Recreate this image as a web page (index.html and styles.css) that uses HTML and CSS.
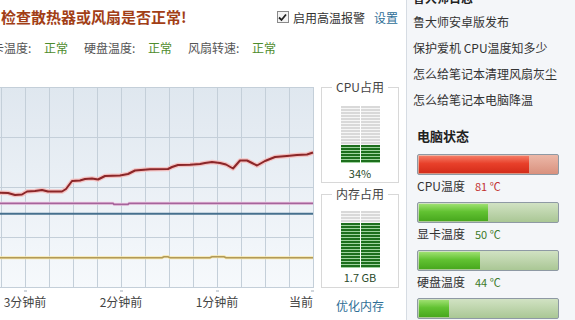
FILE: index.html
```html
<!DOCTYPE html>
<html lang="zh-CN">
<head>
<meta charset="utf-8">
<title>温度监控</title>
<link rel="stylesheet" href="styles.css">
</head>
<body>
<div class="page">
  <main class="main">
    <div class="header">
      <h1 class="title">检查散热器或风扇是否正常!</h1>
      <div class="options">
        <span class="check"><svg width="9" height="9" viewBox="0 0 9 9"><path d="M1 4.5 L3.5 7 L8 1.5" fill="none" stroke="#222" stroke-width="1.8"/></svg></span>
        <span class="opt-label">启用高温报警</span>
        <a class="link set">设置</a>
      </div>
    </div>
    <div class="status">
      <span class="s-label">显卡温度:</span><span class="s-val">正常</span>
      <span class="s-label">硬盘温度:</span><span class="s-val">正常</span>
      <span class="s-label">风扇转速:</span><span class="s-val">正常</span>
    </div>
    <div class="monitor">
      <div class="chart-col">
        <svg class="chart" width="314" height="206" viewBox="0 0 314 206">
          <defs>
            <linearGradient id="bg" x1="0" y1="0" x2="0" y2="1">
              <stop offset="0" stop-color="#dfe7ef"/>
              <stop offset="1" stop-color="#f6f9fc"/>
            </linearGradient>
          </defs>
          <rect x="0" y="0" width="313.5" height="200.5" fill="url(#bg)"/>
          <g stroke="#c4cfd9" stroke-width="1">
            <line x1="0" y1="0.5" x2="313.5" y2="0.5"/>
            <line x1="0" y1="50.5" x2="313.5" y2="50.5"/>
            <line x1="0" y1="100.5" x2="313.5" y2="100.5"/>
            <line x1="0" y1="150.5" x2="313.5" y2="150.5"/>
            <line x1="0" y1="200.5" x2="313.5" y2="200.5"/>
            <line x1="1.5" y1="0" x2="1.5" y2="201"/>
            <line x1="25.5" y1="0" x2="25.5" y2="201"/>
            <line x1="49.5" y1="0" x2="49.5" y2="201"/>
            <line x1="73.5" y1="0" x2="73.5" y2="201"/>
            <line x1="97.5" y1="0" x2="97.5" y2="201"/>
            <line x1="121.5" y1="0" x2="121.5" y2="201"/>
            <line x1="145.5" y1="0" x2="145.5" y2="201"/>
            <line x1="169.5" y1="0" x2="169.5" y2="201"/>
            <line x1="193.5" y1="0" x2="193.5" y2="201"/>
            <line x1="217.5" y1="0" x2="217.5" y2="201"/>
            <line x1="241.5" y1="0" x2="241.5" y2="201"/>
            <line x1="265.5" y1="0" x2="265.5" y2="201"/>
            <line x1="289.5" y1="0" x2="289.5" y2="201"/>
            <line x1="313.5" y1="0" x2="313.5" y2="201"/>
          </g>
          <g fill="#d0d6dc">
            <rect x="24" y="203" width="3" height="2"/>
            <rect x="120" y="203" width="3" height="2"/>
            <rect x="216" y="203" width="3" height="2"/>
            <rect x="311" y="203" width="3" height="2"/>
          </g>
          <polyline fill="none" stroke="#f7e7a8" stroke-width="3" points="0,170.7 162,170.7 164,169.7 168,169.7 170,170.7 210,170.7 212,169.7 224,169.7 226,170.7 313,170.7"/>
          <polyline fill="none" stroke="#b19a5a" stroke-width="1.6" points="0,170.7 162,170.7 164,169.7 168,169.7 170,170.7 210,170.7 212,169.7 224,169.7 226,170.7 313,170.7"/>
          <line x1="0" y1="126.7" x2="313" y2="126.7" stroke="#46708e" stroke-width="2"/>
          <polyline fill="none" stroke="#f2cfe8" stroke-width="3" points="0,116.3 113,116.3 114,117.3 128,117.3 129,116.3 313,116.3"/>
          <polyline fill="none" stroke="#a5649b" stroke-width="1.8" points="0,116.3 113,116.3 114,117.3 128,117.3 129,116.3 313,116.3"/>
          <polyline fill="none" stroke="#f4c3c3" stroke-width="4.5" stroke-linejoin="round" points="0,105.7 8,106 15,108 22,107.5 27,104.5 35,104 42,103 48,104.5 62,104.5 66,102 72,94 80,93.5 85,92 92,91.5 98,92.5 105,89 120,88.5 128,87 135,83.5 150,82.3 168,82 172,80 178,78 190,77.7 200,77 205,76 212,75 220,76 226,77.5 233,81.5 240,73.5 247,73.5 252,76 257,78.5 265,74 275,70 287,69 297,68 307,67.5 313,65.5"/>
          <polyline fill="none" stroke="#8b2628" stroke-width="2" stroke-linejoin="round" points="0,105.7 8,106 15,108 22,107.5 27,104.5 35,104 42,103 48,104.5 62,104.5 66,102 72,94 80,93.5 85,92 92,91.5 98,92.5 105,89 120,88.5 128,87 135,83.5 150,82.3 168,82 172,80 178,78 190,77.7 200,77 205,76 212,75 220,76 226,77.5 233,81.5 240,73.5 247,73.5 252,76 257,78.5 265,74 275,70 287,69 297,68 307,67.5 313,65.5"/>
        </svg>
        <div class="axis">
          <span class="tick">3分钟前</span>
          <span class="tick">2分钟前</span>
          <span class="tick">1分钟前</span>
          <span class="tick last">当前</span>
        </div>
      </div>
      <div class="side-col">
        <fieldset class="gauge cpu">
          <legend>CPU占用</legend>
          <div class="meter">
            <div class="mcol"><div class="mfill" style="height:18px"></div></div>
            <div class="mcol"><div class="mfill" style="height:18px"></div></div>
          </div>
          <div class="gval">34%</div>
        </fieldset>
        <fieldset class="gauge mem">
          <legend>内存占用</legend>
          <div class="meter">
            <div class="mcol"><div class="mfill" style="height:45px"></div></div>
            <div class="mcol"><div class="mfill" style="height:45px"></div></div>
          </div>
          <div class="gval">1.7 GB</div>
        </fieldset>
        <a class="link optimize">优化内存</a>
      </div>
    </div>
  </main>
  <aside class="sidebar">
    <h2 class="side-head cut">鲁大师日志</h2>
    <ul class="news">
      <li>鲁大师安卓版发布</li>
      <li>保护爱机 CPU温度知多少</li>
      <li>怎么给笔记本清理风扇灰尘</li>
      <li>怎么给笔记本电脑降温</li>
    </ul>
    <h2 class="side-head pc">电脑状态</h2>
    <div class="temps">
      <div class="bar red"><div class="fill" style="width:80%"></div></div>
      <div class="temp-row"><span class="t-name">CPU温度</span><span class="t-val hot">81 ℃</span></div>
      <div class="bar green"><div class="fill" style="width:50%"></div></div>
      <div class="temp-row"><span class="t-name">显卡温度</span><span class="t-val">50 ℃</span></div>
      <div class="bar green"><div class="fill" style="width:44%"></div></div>
      <div class="temp-row"><span class="t-name">硬盘温度</span><span class="t-val">44 ℃</span></div>
      <div class="bar green"><div class="fill" style="width:22%"></div></div>
    </div>
  </aside>
</div>
</body>
</html>
```
FILE: styles.css
```css
* { box-sizing: border-box; }
html, body {
  margin: 0;
  padding: 0;
  width: 575px;
  height: 320px;
  overflow: hidden;
  background: #ffffff;
  font-family: "Noto Sans CJK SC", "Liberation Sans", sans-serif;
  font-size: 12px;
  color: #333;
}
.page {
  display: flex;
  width: 575px;
  height: 320px;
}
.main {
  width: 406px;
  flex: none;
  overflow: hidden;
}
.header {
  height: 34px;
  display: flex;
  align-items: center;
  padding-left: 1px;
  padding-right: 8px;
}
.title {
  margin: 0;
  font-size: 15px;
  font-weight: bold;
  color: #a23e16;
  letter-spacing: 0;
  line-height: 20px;
}
.options {
  margin-left: auto;
  display: flex;
  align-items: center;
}
.check {
  width: 12px;
  height: 12px;
  border: 1px solid #8a8a8a;
  background: #f4f4f4;
  display: flex;
  align-items: center;
  justify-content: center;
  margin-right: 4px;
}
.opt-label { color: #333; }
.link { color: #2f6f97; text-decoration: none; }
.set { margin-left: 9px; }
.status {
  height: 26px;
  display: flex;
  align-items: center;
  margin-left: -20px;
  white-space: nowrap;
}
.s-label { color: #555; width: 64px; }
.s-val { color: #4e8c2c; width: 40px; }
.monitor {
  display: flex;
  margin-top: 20px;
}
.chart-col {
  width: 314px;
  flex: none;
  padding-top: 7px;
}
.chart { display: block; }
.axis {
  display: grid;
  grid-template-columns: 50px 142px 50px 71px;
  line-height: 14px;
  margin-top: 2px;
  color: #444;
}
.tick { text-align: center; white-space: nowrap; }
.tick.last { text-align: right; }
.side-col {
  margin-left: 7px;
  width: 78px;
  display: flex;
  flex-direction: column;
}
.gauge {
  margin: 0;
  padding: 0 0 2px;
  border: 1px solid #d8d8d8;
  min-width: 0;
}
.gauge legend {
  margin: 0 auto;
  padding: 0 4px;
  line-height: 14px;
  color: #444;
}
.cpu .meter { margin-top: 12px; }
.mem { margin-top: 4px; padding-bottom: 3px; }
.mem .meter { margin-top: 10px; }
.meter {
  display: flex;
  justify-content: center;
  gap: 1px;
}
.mcol {
  width: 19px;
  height: 57px;
  display: flex;
  align-items: flex-end;
  background: repeating-linear-gradient(to bottom, #d9d9d9 0 2px, #f6f6f6 2px 3px);
}
.mfill {
  width: 100%;
  background: repeating-linear-gradient(to bottom, #1d6f1d 0 2px, #9fd39f 2px 3px);
}
.gval {
  text-align: center;
  line-height: 14px;
  margin-top: 3px;
  color: #2a4a2a;
  font-size: 11px;
}
.mem .gval { margin-top: 2px; }
.optimize {
  margin-top: 10px;
  line-height: 16px;
  text-align: center;
}
.sidebar {
  flex: 1;
  background: #f4f6f9;
  border-left: 1px solid #d6dce3;
  padding-left: 6px;
}
.side-head {
  margin: 0;
  font-size: 12px;
  font-weight: bold;
  line-height: 16px;
  color: #222;
}
.side-head.cut { margin-top: -10px; }
.news {
  list-style: none;
  margin: 3px 0 0;
  padding: 0;
}
.news li {
  line-height: 26px;
  white-space: nowrap;
  color: #333;
}
.side-head.pc {
  margin-top: 15px;
  margin-left: 4px;
  font-size: 13px;
}
.temps {
  margin-top: 10px;
  margin-left: 4px;
  width: 142px;
}
.bar {
  height: 21px;
  border: 1px solid #8e99a4;
  border-radius: 2px;
  padding: 1px;
  background: #c9ccd0;
}
.bar .fill { height: 100%; }
.bar.red { background: linear-gradient(to bottom, #ecb8a8, #d9917e); border-color: #8e99a4; }
.bar.red .fill { background: linear-gradient(to bottom, #f47a64 0%, #e8402a 45%, #d42c1a 100%); }
.bar.green { background: linear-gradient(to bottom, #d1e2c3, #aac795); }
.bar.green .fill { background: linear-gradient(to bottom, #9ee070 0%, #62c232 45%, #48a81e 100%); }
.temp-row {
  height: 27px;
  padding-top: 1px;
  line-height: 20px;
  display: flex;
}
.t-name { width: 58px; color: #333; }
.t-val { color: #3d7a2a; font-size: 11px; }
.t-val.hot { color: #c23030; }
```
